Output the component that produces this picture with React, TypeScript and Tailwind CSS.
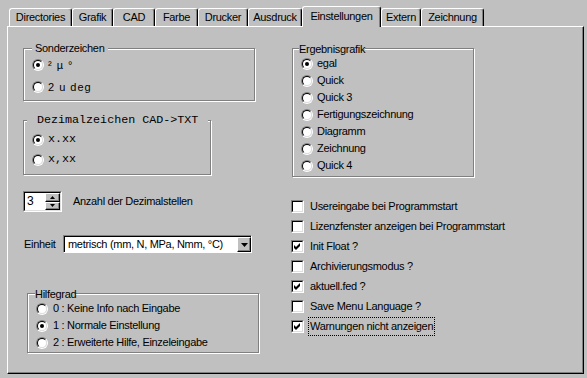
import React from 'react';

const tabs = [
    { label: 'Directories', w: 'w-[63px]' },
    { label: 'Grafik', w: 'w-[41px]' },
    { label: 'CAD', w: 'w-[42px]' },
    { label: 'Farbe', w: 'w-[43px]' },
    { label: 'Drucker', w: 'w-[50px]' },
    { label: 'Ausdruck', w: 'w-[54px]' },
    { label: 'Einstellungen', w: 'w-[79px]', active: true },
    { label: 'Extern', w: 'w-[40px]' },
    { label: 'Zeichnung', w: 'w-[63px]' },
];

const ergebnis = ['egal', 'Quick', 'Quick 3', 'Fertigungszeichnung', 'Diagramm', 'Zeichnung', 'Quick 4'];

const checks = [
    { label: 'Usereingabe bei Programmstart', checked: false },
    { label: 'Lizenzfenster anzeigen bei Programmstart', checked: false },
    { label: 'Init Float ?', checked: true },
    { label: 'Archivierungsmodus ?', checked: false },
    { label: 'aktuell.fed ?', checked: true },
    { label: 'Save Menu Language ?', checked: false },
    { label: 'Warnungen nicht anzeigen', checked: true, focused: true },
];

function Radio({ checked = false }: { checked?: boolean }) {
    return (
        <span className="flex h-3 w-3 shrink-0 rounded-full border border-t-[#808080] border-l-[#808080] border-r-white border-b-white">
            <span className="flex flex-1 items-center justify-center rounded-full border border-t-black border-l-black border-r-[#dfdfdf] border-b-[#dfdfdf] bg-white">
                {checked && <span className="h-1 w-1 rounded-full bg-black" />}
            </span>
        </span>
    );
}

function Checkbox({ checked = false }: { checked?: boolean }) {
    return (
        <span className="flex h-[13px] w-[13px] shrink-0 border border-t-[#808080] border-l-[#808080] border-r-white border-b-white">
            <span className="flex flex-1 items-center justify-center border border-t-black border-l-black border-r-[#dfdfdf] border-b-[#dfdfdf] bg-white">
                {checked && (
                    <svg width="7" height="7" viewBox="0 0 7 7">
                        <path d="M0 2 L2 4 L6 0 L6 3 L2 7 L0 5 Z" fill="black" />
                    </svg>
                )}
            </span>
        </span>
    );
}

function Arrow({ down = false }: { down?: boolean }) {
    return (
        <svg width="5" height="3" viewBox="0 0 5 3">
            <path d={down ? 'M0 0 H5 L2.5 3 Z' : 'M0 3 H5 L2.5 0 Z'} fill="black" />
        </svg>
    );
}

function Group({ label, className, labelClass, children }: {
    label: string;
    className: string;
    labelClass: string;
    children: React.ReactNode;
}) {
    return (
        <div className={`border border-[#808080] shadow-[inset_1px_1px_0_#fff,1px_1px_0_#fff] ${className}`}>
            <span className={`block w-fit bg-[#c0c0c0] leading-[13px] ${labelClass}`}>{label}</span>
            {children}
        </div>
    );
}

export default function App() {
    return (
        <div className="h-[378px] w-[587px] overflow-hidden bg-[#c0c0c0] font-['Liberation_Sans',Arial,sans-serif] text-[11px] tracking-[-0.3px] text-black">
            {/* Tab strip */}
            <div className="flex h-[26px] items-end pl-[9px]">
                {tabs.map((t) =>
                    t.active ? (
                        <div
                            key={t.label}
                            className={`relative z-10 -mb-px flex h-[21px] ${t.w} items-center justify-center rounded-t-[3px] border-l border-t border-r border-l-white border-t-white border-r-black bg-[#c0c0c0] pb-[2px] shadow-[inset_-1px_0_0_#808080]`}
                        >
                            {t.label}
                        </div>
                    ) : (
                        <div
                            key={t.label}
                            className={`flex h-[18px] ${t.w} items-center justify-center rounded-t-[3px] border-l border-t border-r border-l-white border-t-white border-r-black shadow-[inset_-1px_0_0_#808080]`}
                        >
                            {t.label}
                        </div>
                    )
                )}
            </div>

            {/* Panel */}
            <div className="ml-[7px] flex h-[348px] w-[577px] border border-l-white border-t-white border-r-black border-b-black shadow-[inset_-1px_-1px_0_#808080]">
                {/* Left column */}
                <div className="ml-[15px] flex w-[237px] flex-col">
                    <Group label="Sonderzeichen" className="mt-[21px] h-[53px] w-[232px]" labelClass="-mt-[7px] ml-[8px] px-[3px]">
                        <div className="mt-[2px] ml-[8px] flex h-[16px] items-center gap-[4px]">
                            <Radio checked />
                            <span className="tracking-[1px]">² µ °</span>
                        </div>
                        <div className="mt-[6px] ml-[8px] flex h-[16px] items-center gap-[4px]">
                            <Radio />
                            <span className="tracking-[1px]">2 u deg</span>
                        </div>
                    </Group>

                    <Group
                        label="Dezimalzeichen CAD->TXT"
                        className="mt-[19px] h-[55px] w-[188px] font-['Liberation_Mono','Courier_New',monospace] text-[11.7px] tracking-normal"
                        labelClass="-mt-[7px] ml-[3px] px-[10px]"
                    >
                        <div className="mt-[5px] ml-[8px] flex h-[16px] items-center gap-[4px]">
                            <Radio checked />
                            <span>x.xx</span>
                        </div>
                        <div className="mt-[4px] ml-[8px] flex h-[16px] items-center gap-[4px]">
                            <Radio />
                            <span>x,xx</span>
                        </div>
                    </Group>

                    {/* Spin */}
                    <div className="mt-[16px] flex items-center">
                        <div className="flex h-[21px] w-[39px] border border-t-[#808080] border-l-[#808080] border-r-white border-b-white">
                            <div className="flex flex-1 border border-t-black border-l-black border-r-[#dfdfdf] border-b-[#dfdfdf] bg-white">
                                <span className="pl-[2px] text-[12px] leading-[17px]">3</span>
                                <div className="ml-auto flex w-[15px] flex-col">
                                    <span className="flex flex-1 items-center justify-center border border-l-white border-t-white border-r-black border-b-black bg-[#c0c0c0] shadow-[inset_-1px_-1px_0_#808080]">
                                        <Arrow />
                                    </span>
                                    <span className="flex flex-1 items-center justify-center border border-l-white border-t-white border-r-black border-b-black bg-[#c0c0c0] shadow-[inset_-1px_-1px_0_#808080]">
                                        <Arrow down />
                                    </span>
                                </div>
                            </div>
                        </div>
                        <span className="ml-[11px]">Anzahl der Dezimalstellen</span>
                    </div>

                    {/* Einheit */}
                    <div className="mt-[23px] ml-[1px] flex items-center">
                        <span className="w-[39px]">Einheit</span>
                        <div className="flex h-[18px] w-[189px] border border-t-[#808080] border-l-[#808080] border-r-white border-b-white">
                            <div className="flex flex-1 items-center border-l border-t border-l-black border-t-black bg-white">
                                <span className="pl-[3px]">metrisch (mm, N, MPa, Nmm, °C)</span>
                                <span className="ml-auto flex h-full w-[14px] items-center justify-center border border-l-white border-t-white border-r-black border-b-black bg-[#c0c0c0] shadow-[inset_-1px_-1px_0_#808080]">
                                    <svg width="7" height="4" viewBox="0 0 7 4">
                                        <path d="M0 0 H7 L3.5 4 Z" fill="black" />
                                    </svg>
                                </span>
                            </div>
                        </div>
                    </div>

                    <Group label="Hilfegrad" className="mt-[40px] ml-[4px] h-[60px] w-[232px]" labelClass="-mt-[6px] ml-[7px]">
                        <div className="-mt-px ml-[8px] flex flex-col">
                            {['0 : Keine Info nach Eingabe', '1 : Normale Einstellung', '2 : Erweiterte Hilfe, Einzeleingabe'].map((l, i) => (
                                <div key={l} className="flex h-[17px] items-center gap-[5px]">
                                    <Radio checked={i === 1} />
                                    <span>{l}</span>
                                </div>
                            ))}
                        </div>
                    </Group>
                </div>

                {/* Right column */}
                <div className="ml-[31px] flex flex-col">
                    <Group label="Ergebnisgrafik" className="mt-[21px] ml-[1px] h-[129px] w-[182px]" labelClass="-mt-[6px] ml-[6px]">
                        <div className="-mt-px ml-[8px] flex flex-col">
                            {ergebnis.map((l, i) => (
                                <div key={l} className="flex h-[17px] items-center gap-[4px]">
                                    <Radio checked={i === 0} />
                                    <span>{l}</span>
                                </div>
                            ))}
                        </div>
                    </Group>

                    <div className="mt-[19px] flex flex-col">
                        {checks.map((c) => (
                            <div key={c.label} className="flex h-[20px] items-center gap-[4px] whitespace-nowrap">
                                <Checkbox checked={c.checked} />
                                <span
                                    className={`border px-px leading-[17px] ${c.focused ? 'border-dotted border-black' : 'border-transparent'}`}
                                >
                                    {c.label}
                                </span>
                            </div>
                        ))}
                    </div>
                </div>
            </div>
        </div>
    );
}
